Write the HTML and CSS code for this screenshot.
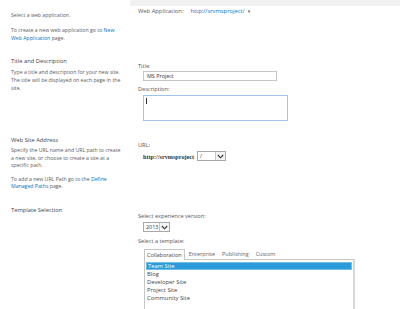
FILE: index.html
```html
<!DOCTYPE html>
<html>
<head>
    <meta charset="UTF-8">
    <title>Create Site Collection</title>
    <link rel="stylesheet" href="styles.css">
</head>
<body>
    <div class="band"></div>
    <div class="form">
        <section class="row row-app">
            <div class="info">
                <p>Select a web application.</p>
                <p class="gap">To create a new web application go to <a href="#">New<br>Web Application</a> page.</p>
            </div>
            <div class="fields">
                <div class="app-pick">
                    <span>Web Application:</span>
                    <a href="#">http://srvmsproject/</a>
                    <span class="caret">&#9662;</span>
                </div>
            </div>
        </section>

        <section class="row row-title">
            <div class="info">
                <h3>Title and Description</h3>
                <p class="desc">Type a title and description for your new site.<br>The title will be displayed on each page in the<br>site.</p>
            </div>
            <div class="fields">
                <label>Title:</label>
                <input type="text" class="title-input" value="MS Project">
                <label class="label-desc">Description:</label>
                <div class="textarea"><span class="cursor"></span></div>
            </div>
        </section>

        <section class="row row-url">
            <div class="info">
                <h3>Web Site Address</h3>
                <p class="desc">Specify the URL name and URL path to create<br>a new site, or choose to create a site at a<br>specific path.</p>
                <p class="desc gap2">To add a new URL Path go to the <a href="#">Define<br>Managed Paths</a> page.</p>
            </div>
            <div class="fields">
                <label>URL:</label>
                <div class="url-row">
                    <span class="host">http://srvmsproject</span>
                    <div class="select path"><span class="val">/</span><span class="arrow"><svg width="7" height="5" viewBox="0 0 7 5"><path d="M0.8 1 L3.5 3.8 L6.2 1" fill="none" stroke="#333" stroke-width="1.1"/></svg></span></div>
                </div>
            </div>
        </section>

        <section class="row row-template">
            <div class="info">
                <h3>Template Selection</h3>
            </div>
            <div class="fields">
                <label>Select experience version:</label>
                <div class="select version"><span class="val">2013</span><span class="arrow"><svg width="7" height="5" viewBox="0 0 7 5"><path d="M0.8 1 L3.5 3.8 L6.2 1" fill="none" stroke="#333" stroke-width="1.1"/></svg></span></div>
                <label class="label-tpl">Select a template:</label>
                <div class="templates">
                    <div class="tabs">
                        <span class="tab active">Collaboration</span>
                        <span class="tab">Enterprise</span>
                        <span class="tab">Publishing</span>
                        <span class="tab">Custom</span>
                    </div>
                    <ul class="list">
                        <li class="selected">Team Site</li>
                        <li>Blog</li>
                        <li>Developer Site</li>
                        <li>Project Site</li>
                        <li>Community Site</li>
                    </ul>
                </div>
            </div>
        </section>
    </div>
</body>
</html>
```

FILE: styles.css
```css
body {
    margin: 0;
    font-family: "Open Sans", "DejaVu Sans", sans-serif;
    font-size: 5.2px;
    color: #5a5a5a;
    background-color: white;
    overflow: hidden;
}
.band {
    height: 6px;
    margin-left: 130px;
    background-color: #f1f1f1;
}
.form {
    padding-left: 11px;
}
.row {
    display: flex;
}
.info {
    width: 122px;
    padding-right: 5px;
    flex-shrink: 0;
    white-space: nowrap;
}
.fields {
    display: flex;
    flex-direction: column;
    align-items: flex-start;
}
p, h3 {
    margin: 0;
    line-height: 8px;
}
a {
    color: #0072c6;
    text-decoration: none;
}
h3 {
    font-weight: normal;
    font-size: 5.8px;
    color: #444;
}
label {
    font-size: 5.6px;
    line-height: 8px;
    color: #555;
}
.gap {
    margin-top: 8px;
    line-height: 7.5px;
}

/* web application */
.row-app {
    height: 51px;
}
.row-app .info {
    padding-top: 5px;
}
.row-app .fields {
    padding-top: 1px;
}
.app-pick {
    font-size: 5.8px;
    line-height: 8px;
    display: flex;
    gap: 7px;
}
.caret {
    font-size: 5px;
    color: #666;
    margin-left: -4px;
}

/* title and description */
.row-title {
    height: 79px;
}
.desc {
    margin-top: 3px;
}
.row-title .fields {
    padding-top: 5px;
}
.title-input {
    margin: 1px 0 0 5px;
    width: 134px;
    height: 10px;
    box-sizing: border-box;
    border: 1px solid #c6c6c6;
    padding: 0 3px;
    font-family: inherit;
    font-size: 5.4px;
    color: #333;
    outline: none;
}
.label-desc {
    margin-top: 4px;
}
.textarea {
    margin: 2px 0 0 5px;
    width: 145px;
    height: 26px;
    box-sizing: border-box;
    border: 1px solid #9fc4ec;
    padding: 2px 2px;
}
.cursor {
    display: block;
    width: 1px;
    height: 6px;
    background-color: #333;
}

/* url */
.row-url {
    height: 70px;
}
.row-url .desc {
    line-height: 7.6px;
    margin-top: 3px;
}
.row-url .gap2 {
    margin-top: 6px;
}
.row-url .fields {
    padding-top: 5px;
}
.url-row {
    margin: 2px 0 0 5px;
    display: flex;
    align-items: center;
    gap: 3px;
}
.host {
    font-family: "Liberation Serif", serif;
    font-weight: bold;
    font-size: 6.2px;
    color: #333;
}
.select {
    display: flex;
    height: 10px;
    box-sizing: border-box;
    border: 1px solid #a8a8a8;
    background-color: white;
}
.select .val {
    font-size: 5.4px;
    line-height: 8px;
    padding-left: 2px;
    color: #333;
}
.select .arrow {
    width: 9px;
    border-left: 1px solid #c6c6c6;
    display: flex;
    align-items: center;
    justify-content: center;
    background-color: #f4f4f4;
}
.path .val {
    width: 15px;
}
.version {
    margin: 2px 0 0 5px;
}
.version .val {
    width: 13px;
}

/* templates */
.row-template .fields {
    padding-top: 6px;
}
.label-tpl {
    margin-top: 5px;
}
.templates {
    margin: 3px 0 0 6px;
}
.tabs {
    display: flex;
    gap: 1px;
    height: 11px;
}
.tab {
    font-size: 5.5px;
    line-height: 10px;
    padding: 0 2px;
    color: #666;
    border: 1px solid transparent;
    border-bottom: none;
}
.tab.active {
    color: #444;
    border-color: #c6c6c6;
    background-color: white;
    position: relative;
    top: 1px;
}
.list {
    margin: 0;
    padding: 2px 1px 20px 1px;
    list-style: none;
    width: 211px;
    box-sizing: border-box;
    border: 1px solid #c6c6c6;
    border-right: 2px solid #d8d8d8;
}
.list li {
    font-size: 5.8px;
    line-height: 8px;
    padding-left: 1px;
    color: #444;
}
.list li.selected {
    background-color: #2a9bd8;
    color: white;
    border: 1px solid #6fc0ea;
    line-height: 6px;
}
```
